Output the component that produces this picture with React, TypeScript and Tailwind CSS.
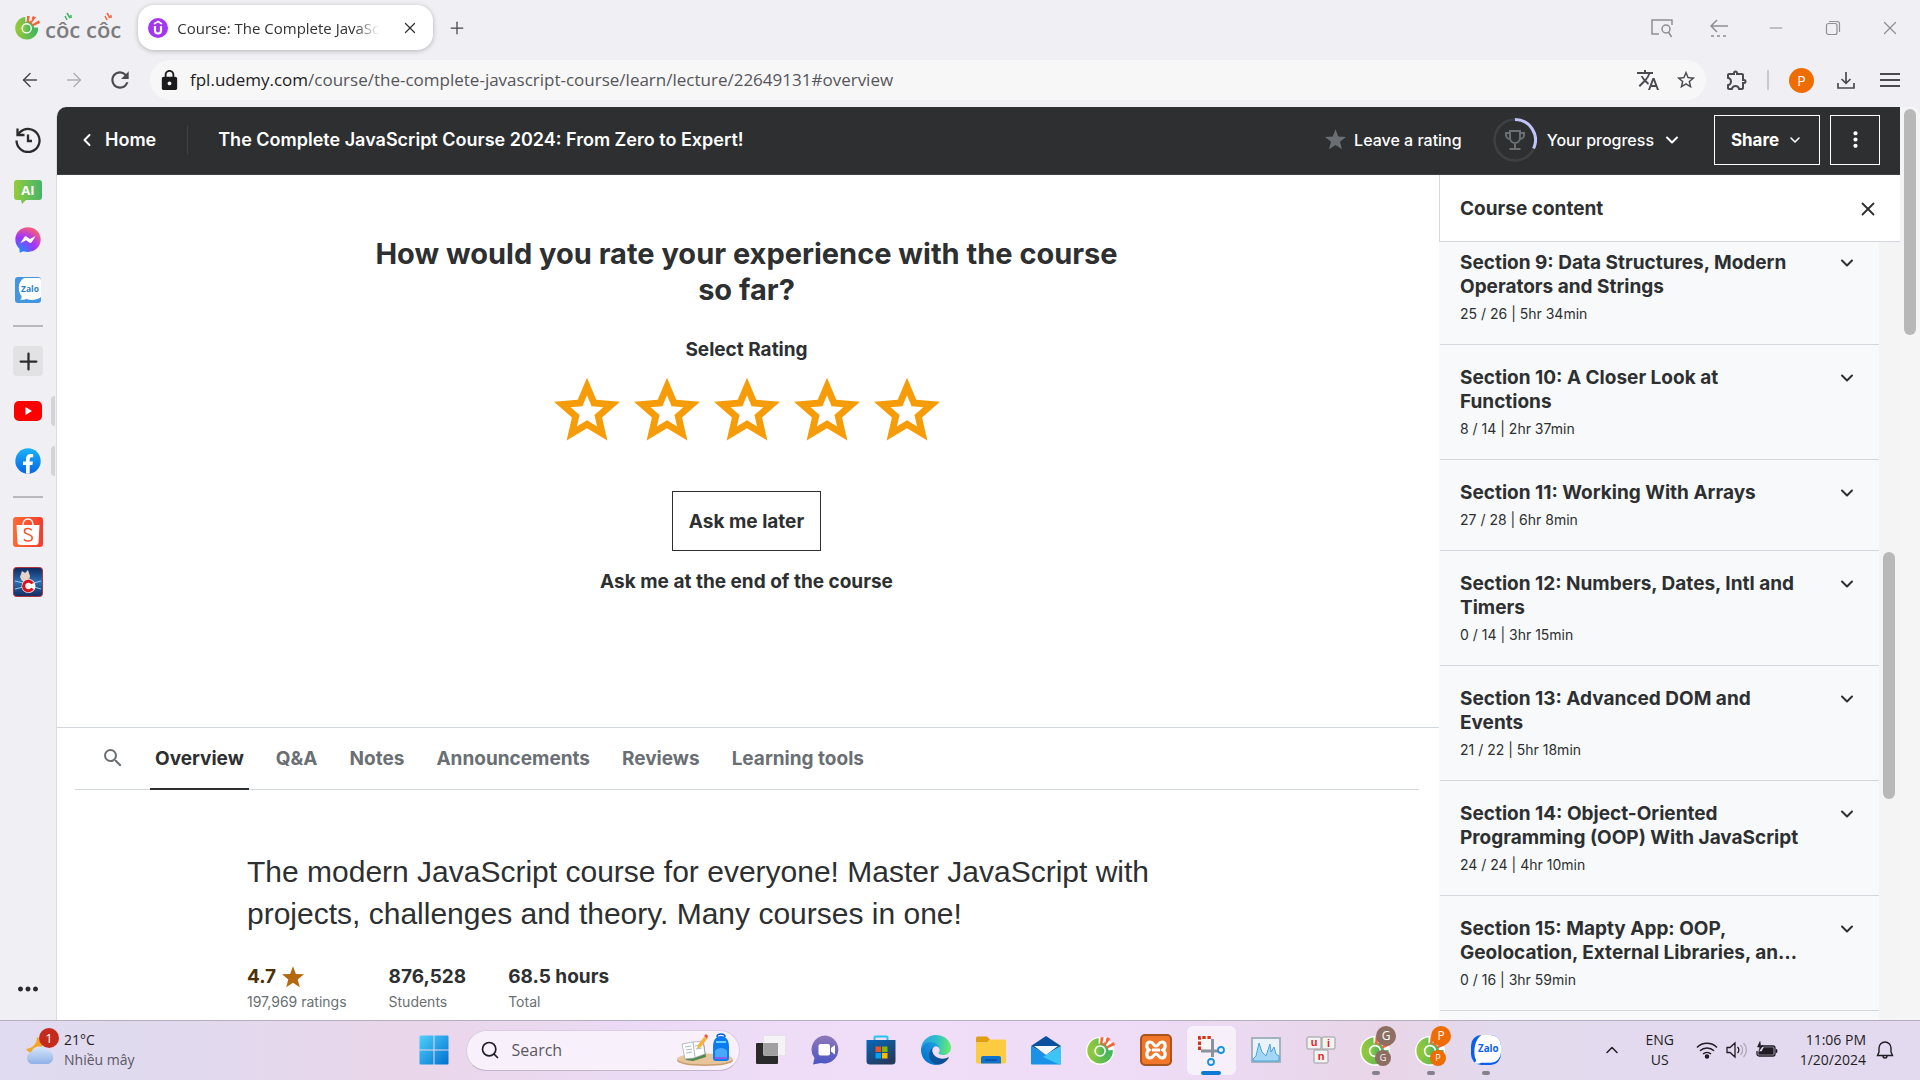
import React from "react";
import {
  ArrowLeft,
  ArrowRight,
  ChevronDown,
  ChevronLeft,
  ChevronUp,
  Plus,
  X,
  Search,
  Minus,
} from "lucide-react";
import {
  MdLock,
  MdTranslate,
  MdStarBorder,
  MdOutlineExtension,
  MdRefresh,
  MdSearch,
  MdMoreVert,
  MdMoreHoriz,
} from "react-icons/md";

const UI = "font-['Open_Sans','Noto_Sans',sans-serif]";

function starPath(cx: number, cy: number, outer: number, inner: number) {
  const pts: string[] = [];
  for (let i = 0; i < 10; i++) {
    const r = i % 2 === 0 ? outer : inner;
    const a = (Math.PI / 5) * i - Math.PI / 2;
    pts.push(`${(cx + r * Math.cos(a)).toFixed(2)} ${(cy + r * Math.sin(a)).toFixed(2)}`);
  }
  return `M${pts.join("L")}Z`;
}

function SolidStar({ className }: { className: string }) {
  return (
    <svg viewBox="0 0 24 24" className={className} fill="currentColor" aria-hidden="true">
      <path d={starPath(12, 13, 12.6, 5.4)} />
    </svg>
  );
}

function CocCocMark({ className, outlined = false }: { className: string; outlined?: boolean }) {
  return (
    <svg viewBox="0 0 32 32" className={className} aria-hidden="true">
      <defs>
        <linearGradient id="coccoc-green" x1="0" x2="1">
          <stop offset="0" stopColor="#97c93c" />
          <stop offset="1" stopColor="#3fb45f" />
        </linearGradient>
      </defs>
      {outlined && <circle cx="15" cy="17" r="15" fill="#fff" />}
      <path
        d="M14 3.2A13.6 13.6 0 1 0 28.6 16l-6.2.4A7.4 7.4 0 1 1 14.4 9.600Z"
        fill="url(#coccoc-green)"
      />
      <circle cx="15" cy="17" r="9" fill="url(#coccoc-green)" />
      <circle cx="15" cy="17" r="6.200" fill="#fff" />
      <circle cx="15" cy="17" r="4.600" fill="url(#coccoc-green)" />
      <path d="M15.500 2.500l3.200 0-1.400 8-2.200-.4zM22.500 2.500l3.600 1.400-6 8-2-1.200zM29.500 7.500l1.500 3.200-8.400 3.800-1.200-2z" fill="#f4653b" />
      <path d="M14 2.600v7M20.400 2v6" stroke="#fff" strokeWidth="1" />
    </svg>
  );
}

function CocCocLogo() {
  return (
    <div className="flex items-center gap-1" role="img" aria-label="côc côc">
      <CocCocMark className="size-[27px]" />
      <div className="relative pt-[2px]">
        <span className="block text-[22px] font-semibold leading-7 text-[#7b7c80]">côc côc</span>
        <svg viewBox="0 0 76 10" className="absolute -top-[2px] left-0 h-[10px] w-[76px]" fill="none" strokeWidth="1.500" aria-hidden="true">
          <path d="M20 5l2 4M22 2l3 5M26 4l0 3" stroke="#3fb45f" />
          <path d="M60 5l2 4M62 2l3 5M66 4l0 3" stroke="#f4653b" />
        </svg>
      </div>
    </div>
  );
}

function UdemyMark() {
  return (
    <svg viewBox="0 0 20 20" className="size-5 shrink-0" aria-hidden="true">
      <circle cx="10" cy="10" r="10" fill="#a435f0" />
      <path d="M6 6l4-2.500L14 6" fill="none" stroke="#fff" strokeWidth="1.600" />
      <path d="M7 8v4.500a3 3 0 0 0 6 0V8" fill="none" stroke="#fff" strokeWidth="2.200" />
    </svg>
  );
}

function TitleBar() {
  const control = "flex h-8 w-[57px] items-center justify-center text-[#8f8e93]";
  return (
    <header className="flex h-[55px] shrink-0 items-center pl-[14px] pr-[2px]">
      <CocCocLogo />
      <div className="ml-[17px] flex h-[45px] w-[295px] items-center rounded-2xl bg-white pl-[10px] pr-[14px] shadow-[0_1px_5px_rgba(0,0,0,0.25)]">
        <UdemyMark />
        <span className="ml-[9px] whitespace-nowrap text-[15px] leading-5 text-[#333] [mask-image:linear-gradient(to_right,black_88%,transparent)]">
          Course: The Complete JavaSc
        </span>
        <button aria-label="Close tab" className="ml-auto text-[#333]">
          <X className="size-[18px]" strokeWidth={1.6} />
        </button>
      </div>
      <button aria-label="New tab" className="ml-[14px] text-[#444]">
        <Plus className="size-5" strokeWidth={1.5} />
      </button>
      <div className="ml-auto flex">
        <button aria-label="Search tabs" className={control}>
          <svg viewBox="0 0 22 20" className="h-5 w-[22px]" fill="none" stroke="currentColor" strokeWidth="1.500">
            <path d="M8 16H1V2h20v5" />
            <circle cx="15" cy="11" r="4" />
            <path d="M17.500 14l3 5" />
          </svg>
        </button>
        <button aria-label="Tab history" className={control}>
          <svg viewBox="0 0 20 20" className="size-5" fill="none" stroke="currentColor" strokeWidth="1.500">
            <path d="M19 8H2M8 2L2 8l6 6" />
            <path d="M2 18h17" strokeDasharray="3 3" />
          </svg>
        </button>
        <button aria-label="Minimize" className={control}>
          <Minus className="size-5" strokeWidth={1.3} />
        </button>
        <button aria-label="Restore" className={control}>
          <svg viewBox="0 0 16 16" className="size-4" fill="none" stroke="currentColor" strokeWidth="1.200">
            <rect x="1.500" y="3.500" width="10.500" height="11" rx="2" />
            <path d="M4 1.500h8a2.500 2.500 0 0 1 2.500 2.500v8" />
          </svg>
        </button>
        <button aria-label="Close window" className={control}>
          <X className="size-[22px]" strokeWidth={1.3} />
        </button>
      </div>
    </header>
  );
}

function Toolbar() {
  return (
    <div className="flex h-[52px] shrink-0 items-center pb-[2px] pl-[19px] pr-5 text-[#4a4a4f]">
      <button aria-label="Back">
        <ArrowLeft className="size-[22px]" strokeWidth={1.6} />
      </button>
      <button aria-label="Forward" className="ml-[22px] text-[#b0afb4]">
        <ArrowRight className="size-[22px]" strokeWidth={1.6} />
      </button>
      <button aria-label="Reload" className="ml-[22px]">
        <MdRefresh className="size-[26px]" />
      </button>
      <div className="ml-[17px] flex h-10 flex-1 items-center rounded-full bg-[#f7f7f8] pl-2 pr-[9px]">
        <MdLock className="size-[23px] text-[#1b1b1d]" />
        <div role="textbox" aria-label="Address" className="ml-[9px] whitespace-nowrap text-[17px] leading-6 text-[#55555a]">
          <span className="font-medium text-[#1b1b1d]">fpl.udemy.com</span>
          /course/the-complete-javascript-course/learn/lecture/22649131#overview
        </div>
        <button aria-label="Translate" className="ml-auto">
          <MdTranslate className="size-6" />
        </button>
        <button aria-label="Bookmark" className="ml-[15px]">
          <MdStarBorder className="size-[22px]" />
        </button>
      </div>
      <button aria-label="Extensions" className="ml-[19px]">
        <MdOutlineExtension className="size-6" />
      </button>
      <div className="ml-[18px] h-5 w-[2px] bg-[#c9c8cd]" />
      <button aria-label="Profile" className="ml-[20px] flex size-[25px] items-center justify-center rounded-full bg-[#ef6c00] text-[14px] text-white">
        P
      </button>
      <button aria-label="Downloads" className="ml-[22px]">
        <svg viewBox="0 0 20 20" className="size-5" fill="none" stroke="currentColor" strokeWidth="1.700">
          <path d="M10 2v11M5.500 9L10 13.300 14.500 9M2 13v5h16v-5" />
        </svg>
      </button>
      <button aria-label="Menu" className="ml-[24px]">
        <svg viewBox="0 0 20 16" className="h-4 w-5" stroke="currentColor" strokeWidth="1.800">
          <path d="M0 2h20M0 8h20M0 14h20" />
        </svg>
      </button>
    </div>
  );
}

function HistoryIcon() {
  return (
    <svg viewBox="0 0 26 26" className="size-[26px]" fill="none" stroke="#2b2b2e" strokeWidth="2.300">
      <path d="M1.500 13.500A11.500 11.500 0 1 0 5 5.200L3 7.500" />
      <path d="M2.500 1.500v6.500h7M13 7.500V14h4" />
    </svg>
  );
}

function AiIcon() {
  return (
    <svg viewBox="0 -3 28 27" className="h-[27px] w-7">
      <defs>
        <linearGradient id="ai-green" x1="0" x2="1">
          <stop offset="0" stopColor="#94cc3a" />
          <stop offset="1" stopColor="#46b46a" />
        </linearGradient>
      </defs>
      <path d="M3 0h22a3 3 0 0 1 3 3v14a3 3 0 0 1-3 3H12l-4 4-1-4H3a3 3 0 0 1-3-3V3a3 3 0 0 1 3-3z" fill="url(#ai-green)" />
      <text x="14" y="14.500" textAnchor="middle" fontSize="13" fontWeight="700" fill="#fff" fontFamily="Open Sans, sans-serif">AI</text>
    </svg>
  );
}

function MessengerIcon() {
  return (
    <svg viewBox="0 0 26 26" className="size-[26px]">
      <defs>
        <radialGradient id="messenger" cx="0.2" cy="1" r="1.100">
          <stop offset="0" stopColor="#1292ff" />
          <stop offset="0.550" stopColor="#a033ff" />
          <stop offset="1" stopColor="#ff6070" />
        </radialGradient>
      </defs>
      <path d="M13 0.300C5.800.3.300 5.500.3 12.600c0 3.700 1.600 6.900 4.100 9.100l.4 4 3.600-1.500c1.400.5 3 .7 4.600.7 7.200 0 12.700-5.200 12.700-12.300S20.200.3 13 .3z" fill="url(#messenger)" />
      <path d="M5.400 16.200l3.700-5.900a2 2 0 0 1 2.800-.5l3 2.200 5.700-3-3.700 6a2 2 0 0 1-2.800.5l-3-2.200z" fill="#fff" />
    </svg>
  );
}

function ZaloIcon({ className, rounded = false }: { className: string; rounded?: boolean }) {
  return (
    <svg viewBox="0 0 26 26" className={className}>
      <rect width="26" height="26" rx={rounded ? 9 : 3} fill={rounded ? "#0b5fe8" : "#4296e0"} />
      <path
        d={rounded ? "M9 0h8a9 9 0 0 1 9 9v6a9 9 0 0 1-9 9H9c-2 1-4 1-6 .5 1-1 1.500-2 1.500-3C2 18 2 5 9 0z" : "M9 1h15a2 2 0 0 1 2 2v17c-5 4-12 3-15 2-2 1-4 1-6 .5 2-1 1.500-2.500 1.500-3.500C3 15 2 5 9 1z"}
        fill="#fff"
      />
      <text x="15" y="14.500" textAnchor="middle" fontSize="8.500" fontWeight="700" fill={rounded ? "#0b5fe8" : "#2f80d0"} fontFamily="Open Sans, sans-serif">Zalo</text>
    </svg>
  );
}

function YoutubeIcon() {
  return (
    <svg viewBox="0 0 28 20" className="h-5 w-7">
      <rect width="28" height="20" rx="5" fill="#f00" />
      <path d="M11.500 6v8l6.500-4z" fill="#fff" />
    </svg>
  );
}

function FacebookIcon() {
  return (
    <svg viewBox="0 0 26 26" className="size-[26px]">
      <defs>
        <linearGradient id="facebook" x2="0" y2="1">
          <stop offset="0" stopColor="#1cb2fb" />
          <stop offset="1" stopColor="#0566e3" />
        </linearGradient>
      </defs>
      <circle cx="13" cy="13" r="12.700" fill="url(#facebook)" />
      <path d="M11 25.600V17H8v-3.500h3V11c0-3.200 1.900-5 4.700-5 1 0 2 .2 2.500.3v3h-1.500c-1.500 0-2 .9-2 1.900v2.300h3.300l-.6 3.500H14.700v8.600c-1.200.2-2.500.2-3.700 0z" fill="#fff" />
    </svg>
  );
}

function ShopeeIcon() {
  return (
    <svg viewBox="0 0 30 30" className="size-[30px]">
      <defs>
        <linearGradient id="shopee" x1="0" x2="1">
          <stop offset="0" stopColor="#ff6a33" />
          <stop offset="1" stopColor="#f53d2d" />
        </linearGradient>
      </defs>
      <rect width="30" height="30" rx="3" fill="url(#shopee)" />
      <path d="M3.500 8h23l-1 18a2.500 2.500 0 0 1-2.500 2H7a2.500 2.500 0 0 1-2.500-2z" fill="#fff" />
      <path d="M10 8c0-3.500 2-6 5-6s5 2.500 5 6" fill="none" stroke="#fff" strokeWidth="1.500" />
      <path d="M18.800 13.200c-1.200-1.200-2.500-1.700-4-1.700-2 0-3.400 1.100-3.400 2.700 0 4 7.800 2.300 7.800 6.600 0 1.900-1.700 3.300-4 3.300-1.800 0-3.200-.6-4.400-1.700" fill="none" stroke="#f5502d" strokeWidth="1.500" />
    </svg>
  );
}

function GameIcon() {
  return (
    <svg viewBox="0 0 30 30" className="size-[30px]">
      <defs>
        <linearGradient id="game" x2="0" y2="1">
          <stop offset="0" stopColor="#10275c" />
          <stop offset="0.500" stopColor="#2c6fb4" />
          <stop offset="1" stopColor="#152a5e" />
        </linearGradient>
      </defs>
      <rect x="0.500" y="0.500" width="29" height="29" rx="3" fill="url(#game)" stroke="#b0323a" />
      <path d="M2 14l8 2M2 22l8-2M28 14l-7 2M28 22l-7-2" stroke="#8fc4ee" strokeWidth="1.200" />
      <path d="M9 4l3 2 3-3 2 6-1 5H9L7 10z" fill="#e5d3c8" />
      <circle cx="15.500" cy="19" r="7" fill="#fff" />
      <path d="M19.500 16.500a4.800 4.800 0 1 0 0 5" fill="none" stroke="#d9141b" strokeWidth="3.200" />
    </svg>
  );
}

function SideItem({ label, children, handle = false }: { label: string; children: React.ReactNode; handle?: boolean }) {
  return (
    <div className="flex h-[50px] w-full items-center">
      <div className="w-[11px]" />
      <button aria-label={label} className="flex w-[34px] items-center justify-center">
        {children}
      </button>
      {handle && <div className="ml-[6px] h-[30px] w-1 rounded-l bg-[#d3d2d6]" />}
    </div>
  );
}

function SideRule() {
  return (
    <div className="flex h-[21px] items-center pl-[13px]">
      <div className="h-[2px] w-[30px] bg-[#b9b8bd]" />
    </div>
  );
}

function SideBar() {
  return (
    <nav aria-label="Browser sidebar" className="flex w-14 shrink-0 flex-col pt-2">
      <SideItem label="History"><HistoryIcon /></SideItem>
      <SideItem label="AI chat"><AiIcon /></SideItem>
      <SideItem label="Messenger"><MessengerIcon /></SideItem>
      <SideItem label="Zalo"><ZaloIcon className="size-[26px]" /></SideItem>
      <SideRule />
      <SideItem label="Add shortcut">
        <span className="flex size-[30px] items-center justify-center rounded bg-[#e2e1e3]">
          <Plus className="size-[27px] text-[#2b2b2e]" strokeWidth={2} />
        </span>
      </SideItem>
      <SideItem label="YouTube" handle><YoutubeIcon /></SideItem>
      <SideItem label="Facebook" handle><FacebookIcon /></SideItem>
      <SideRule />
      <SideItem label="Shopee"><ShopeeIcon /></SideItem>
      <SideItem label="Game"><GameIcon /></SideItem>
      <button aria-label="More" className="mb-4 ml-[13px] mt-auto w-[30px]">
        <MdMoreHoriz className="size-[30px] text-[#2b2b2e]" />
      </button>
    </nav>
  );
}

function TrophyRing() {
  return (
    <svg viewBox="0 0 44 44" className="size-11" fill="none" aria-hidden="true">
      <circle cx="22" cy="22" r="20.500" stroke="#3e4143" strokeWidth="2.500" />
      <path d="M22 1.500A20.500 20.500 0 0 1 40.600 30.500" stroke="#c0c4fc" strokeWidth="3" />
      <g stroke="#6a6f73" strokeWidth="2">
        <path d="M17 13h10v7a5 5 0 0 1-10 0zM17 15h-4v2a4 4 0 0 0 4 4M27 15h4v2a4 4 0 0 1-4 4M22 25v5M16.500 31h11" />
      </g>
    </svg>
  );
}

function CourseHeader() {
  return (
    <div className="flex h-[68px] shrink-0 items-center border-b border-[#3e4143] bg-[#2d2f31] pb-[2px] pr-5 text-white">
      <a href="#home" className="flex items-center pl-5 text-[18px] font-semibold leading-6">
        <ChevronLeft className="size-5" strokeWidth={2.4} />
        <span className="ml-2">Home</span>
      </a>
      <div className="ml-[31px] h-7 w-px bg-[#3e4143]" />
      <a href="#course" className="ml-[30px] text-[18px] font-semibold leading-6">
        The Complete JavaScript Course 2024: From Zero to Expert!
      </a>
      <button className="ml-auto flex items-center text-[16px] font-medium leading-6">
        <SolidStar className="mr-2 size-[21px] text-[#6a6f73]" />
        Leave a rating
      </button>
      <button className="ml-[31px] flex items-center text-[16px] font-medium leading-6">
        <TrophyRing />
        <span className="ml-[10px]">Your progress</span>
        <ChevronDown className="ml-2 size-5" strokeWidth={2.4} />
      </button>
      <button className="ml-[32px] flex h-[50px] w-[106px] items-center justify-center gap-1 border border-white text-[17px] font-bold leading-6">
        Share
        <ChevronDown className="ml-1 size-4" strokeWidth={2.4} />
      </button>
      <button aria-label="More options" className="ml-[10px] flex size-[50px] items-center justify-center border border-white">
        <MdMoreVert className="size-[25px]" />
      </button>
    </div>
  );
}

function RatingPrompt() {
  return (
    <section className="flex h-[553px] shrink-0 flex-col items-center border-b border-[#d1d7dc] pr-[3px] pt-[61px] text-[#2d2f31]">
      <h1 className="max-w-[760px] text-center text-[29px] font-bold leading-9">
        How would you rate your experience with the course so far?
      </h1>
      <fieldset className="flex flex-col items-center">
        <legend className="mx-auto pt-[30px] text-[19px] font-bold leading-6">Select Rating</legend>
        <div className="mt-[14px] flex">
          {[1, 2, 3, 4, 5].map((n) => (
            <label key={n} className="relative block w-20">
              <input type="radio" name="rating" value={n} aria-label={`${n} stars`} className="absolute inset-0 appearance-none" />
              <svg viewBox="0 0 80 68" className="h-[68px] w-20" fill="#f69c08">
                <path fillRule="evenodd" d={starPath(40, 36.5, 34.7, 15.8) + starPath(40, 36.5, 17.2, 7.8)} />
              </svg>
            </label>
          ))}
        </div>
      </fieldset>
      <button className="mt-[47px] h-[60px] border border-[#2d2f31] px-4 pt-[2px] text-[19px] font-bold leading-6">
        Ask me later
      </button>
      <button className="mt-[19px] text-[19px] font-bold leading-6">Ask me at the end of the course</button>
    </section>
  );
}

const TABS = ["Overview", "Q&A", "Notes", "Announcements", "Reviews", "Learning tools"];

function CourseTabs() {
  return (
    <div role="tablist" className="mx-[18px] mr-5 flex h-[62px] shrink-0 border-b border-[#d1d7dc] pl-[26px]">
      <button aria-label="Search course" className="w-[26px] pb-[2px]">
        <MdSearch className="size-6 text-[#6a6f73]" />
      </button>
      <div className="ml-[23px] flex gap-[22px]">
        {TABS.map((tab, i) => (
          <button
            key={tab}
            role="tab"
            aria-selected={i === 0}
            className={
              i === 0
                ? "-mb-px border-b-2 border-[#2d2f31] px-[5px] pt-[2px] text-[19px] font-bold leading-6 text-[#2d2f31]"
                : "mb-px px-[5px] pt-[2px] text-[19px] font-bold leading-6 text-[#6a6f73]"
            }
          >
            {tab}
          </button>
        ))}
      </div>
    </div>
  );
}

function Overview() {
  return (
    <section className="mx-auto w-full max-w-[1002px] pt-[61px]">
      <p className="font-['Liberation_Sans',Arial,sans-serif] text-[30px] leading-[42px] text-[#2d2f31]">
        The modern JavaScript course for everyone! Master JavaScript with projects, challenges and theory. Many courses in one!
      </p>
      <dl className="mt-[30px] flex gap-[42px] text-[14px] leading-5 text-[#6a6f73]">
        <div className="flex flex-col-reverse justify-end gap-[3px]">
          <dt>197,969 ratings</dt>
          <dd className="flex items-center gap-[6px] text-[19px] font-bold leading-6 text-[#4d3105]">
            4.7
            <SolidStar className="size-[22px] text-[#b4690e]" />
          </dd>
        </div>
        <div className="flex flex-col-reverse justify-end gap-[3px]">
          <dt>Students</dt>
          <dd className="text-[19px] font-bold leading-6 text-[#2d2f31]">876,528</dd>
        </div>
        <div className="flex flex-col-reverse justify-end gap-[3px]">
          <dt>Total</dt>
          <dd className="text-[19px] font-bold leading-6 text-[#2d2f31]">68.5 hours</dd>
        </div>
      </dl>
    </section>
  );
}

const SECTIONS = [
  { title: "Section 9: Data Structures, Modern Operators and Strings", meta: "25 / 26 | 5hr 34min" },
  { title: "Section 10: A Closer Look at Functions", meta: "8 / 14 | 2hr 37min" },
  { title: "Section 11: Working With Arrays", meta: "27 / 28 | 6hr 8min" },
  { title: "Section 12: Numbers, Dates, Intl and Timers", meta: "0 / 14 | 3hr 15min" },
  { title: "Section 13: Advanced DOM and Events", meta: "21 / 22 | 5hr 18min" },
  { title: "Section 14: Object-Oriented Programming (OOP) With JavaScript", meta: "24 / 24 | 4hr 10min" },
  { title: "Section 15: Mapty App: OOP, Geolocation, External Libraries, an…", meta: "0 / 16 | 3hr 59min" },
];

function CourseContent() {
  return (
    <aside className="flex w-[461px] shrink-0 flex-col text-[#2d2f31]">
      <div className="flex h-[67px] shrink-0 items-center justify-between border-b border-l border-[#d1d7dc] bg-white pl-5 pr-[21px] pt-[2px]">
        <h2 className="text-[19px] font-bold leading-6">Course content</h2>
        <button aria-label="Close course content">
          <X className="size-[22px]" strokeWidth={2} />
        </button>
      </div>
      <div className="flex min-h-0 flex-1">
        <div className="flex-1 overflow-hidden bg-[#f7f9fa]">
          <div className="-mt-3 ml-px">
            {SECTIONS.map((s) => (
              <button key={s.title} className="flex w-full items-start border-b border-[#d1d7dc] pb-[19px] pl-5 pr-[22px] pt-[21px] text-left">
                <span className="w-[352px]">
                  <span className="block text-[19px] font-bold leading-6">{s.title}</span>
                  <span className="mt-1 block text-[14px] leading-[22px]">{s.meta}</span>
                </span>
                <ChevronDown className="ml-auto mt-[2px] size-5" strokeWidth={2.4} />
              </button>
            ))}
          </div>
        </div>
        <div className="w-[21px] bg-[#f4f4f4] pl-1 pt-[310px]">
          <div className="h-[247px] w-3 rounded-full bg-[#b8b8b8]" />
        </div>
      </div>
    </aside>
  );
}

function CourseViewer() {
  return (
    <div className="flex min-w-0 flex-1 overflow-hidden rounded-tl-[10px] rounded-tr-[10px] border-l border-[#dcdbe0] bg-white">
      <div className="flex min-w-0 flex-1 flex-col font-['Inter',sans-serif]">
        <CourseHeader />
        <div className="flex min-h-0 flex-1">
          <main className="flex min-w-0 flex-1 flex-col overflow-hidden">
            <RatingPrompt />
            <CourseTabs />
            <Overview />
          </main>
          <CourseContent />
        </div>
      </div>
      <div className="w-5 shrink-0 bg-[#f5f5f5] pl-1 pt-[2px]">
        <div className="h-[226px] w-3 rounded-full bg-[#b8b8b8]" />
      </div>
    </div>
  );
}

function WeatherIcon() {
  return (
    <div className="relative size-9">
      <svg viewBox="0 0 36 36" className="size-9">
        <defs>
          <linearGradient id="cloud" x2="0" y2="1">
            <stop offset="0" stopColor="#d7e7fb" />
            <stop offset="1" stopColor="#8fb0e6" />
          </linearGradient>
        </defs>
        <path d="M13 5c0 7-4 11-11 12 3 5 10 5 14 1s2-10-3-13z" fill="#f5a623" />
        <path d="M8 32a6 6 0 0 1-1-11.500A8.500 8.500 0 0 1 22 18a7.200 7.200 0 0 1 2.500 14z" fill="url(#cloud)" />
      </svg>
      <span className="absolute -top-[4px] left-[15px] flex size-5 items-center justify-center rounded-full bg-[#c42b1c] text-[13px] text-white">1</span>
    </div>
  );
}

function WindowsIcon() {
  return (
    <svg viewBox="0 0 30 30" className="size-[30px]">
      <defs>
        <linearGradient id="windows" x2="1" y2="1">
          <stop offset="0" stopColor="#4fd0fb" />
          <stop offset="1" stopColor="#0070d0" />
        </linearGradient>
      </defs>
      <path d="M1.500.5h13v14h-14v-13zM15.500.5h13a1 1 0 0 1 1 1v13h-14zM.5 15.500h14v14h-13a1 1 0 0 1-1-1zM15.500 15.500h14v13a1 1 0 0 1-1 1h-13z" fill="url(#windows)" />
    </svg>
  );
}

function SearchArt() {
  return (
    <svg viewBox="0 0 56 34" className="h-[34px] w-14">
      <ellipse cx="28" cy="27.500" rx="28" ry="5.500" fill="#c99b6d" />
      <ellipse cx="28" cy="26" rx="28" ry="5.500" fill="#e8c49a" />
      <path d="M6 13l12-3 9 1 2 13-13 4-7-1z" fill="#4f8a4a" />
      <path d="M5 11l11-2 10-1 2 13-11 4-9 1z" fill="#fff" stroke="#9aa3ad" strokeWidth="0.700" />
      <path d="M16 9l2 15M8 14l6-1M9 17l6-1M9 20l6-1M18 13l6-1M19 16l6-1" stroke="#9aa3ad" strokeWidth="0.800" />
      <path d="M20 16l1-4 6-8 3 2-6 8z" fill="#f9b233" />
      <path d="M27 3l2-2 2 2-1 3z" fill="#f0553c" />
      <path d="M36 14c0-7 3-11 8-11s8 4 8 11v11a3 3 0 0 1-3 3H39a3 3 0 0 1-3-3z" fill="#0a7cf0" />
      <path d="M40 4c0-4 8-4 8 0" fill="none" stroke="#0a5fd0" strokeWidth="1.500" />
      <path d="M38 18c2-4 10-4 12 0v6H38z" fill="#48a8ff" />
      <path d="M38 24h12v2H38z" fill="#8f5cf0" />
      <path d="M39 9h10" stroke="#6fd0ff" strokeWidth="2" />
    </svg>
  );
}

function TaskViewIcon() {
  return (
    <svg viewBox="0 0 30 30" className="size-[30px]">
      <rect x="0" y="8" width="22" height="21" rx="1" fill="#2a2a2a" />
      <rect x="7.500" y="0.500" width="22" height="20" rx="1" fill="#f5f5f5" fillOpacity="0.900" stroke="#ddd" strokeWidth="0.500" />
      <path d="M7.500 8H22v12.500H7.500z" fill="#a0a0a0" />
    </svg>
  );
}

function ChatIcon() {
  return (
    <svg viewBox="0 0 30 30" className="size-[30px]">
      <defs>
        <linearGradient id="chat" x2="0" y2="1">
          <stop offset="0" stopColor="#8f79b8" />
          <stop offset="1" stopColor="#4a55c4" />
        </linearGradient>
      </defs>
      <path d="M15 .5a14 14 0 1 1-5 27.500l-8 1.500 1.500-6.500A14 14 0 0 1 15 .5z" fill="url(#chat)" />
      <rect x="7.500" y="9" width="11.500" height="11.500" rx="2" fill="#fff" />
      <path d="M20 13l4-3v9.500l-4-3z" fill="#fff" />
    </svg>
  );
}

function StoreIcon() {
  return (
    <svg viewBox="0 0 30 30" className="size-[30px]">
      <defs>
        <linearGradient id="store" x2="0.600" y2="1">
          <stop offset="0" stopColor="#0669bc" />
          <stop offset="1" stopColor="#243a5e" />
        </linearGradient>
      </defs>
      <path d="M8.500 7V2.500a1 1 0 0 1 1-1h11a1 1 0 0 1 1 1V7" fill="none" stroke="#28c2f5" strokeWidth="2" />
      <path d="M.5 5h29v21a3.500 3.500 0 0 1-3.500 3.500H4A3.500 3.500 0 0 1 .5 26z" fill="url(#store)" />
      <path d="M9.500 11.500H15V17H9.500z" fill="#f25022" />
      <path d="M16 11.500h5.500V17H16z" fill="#7fba00" />
      <path d="M9.500 18H15v5.500H9.500z" fill="#00a4ef" />
      <path d="M16 18h5.500v5.500H16z" fill="#ffb900" />
    </svg>
  );
}

function EdgeIcon() {
  return (
    <svg viewBox="0 0 256 256" className="size-[30px]">
      <defs>
        <linearGradient id="edge-a" x1="60" x2="240" y1="177" y2="177" gradientUnits="userSpaceOnUse">
          <stop offset="0" stopColor="#0c59a4" />
          <stop offset="1" stopColor="#114a8b" />
        </linearGradient>
        <linearGradient id="edge-b" x1="150" x2="45" y1="100" y2="215" gradientUnits="userSpaceOnUse">
          <stop offset="0" stopColor="#1b9de2" />
          <stop offset="0.600" stopColor="#1384d6" />
          <stop offset="1" stopColor="#0078d4" />
        </linearGradient>
        <linearGradient id="edge-c" x1="20" x2="250" y1="60" y2="90" gradientUnits="userSpaceOnUse">
          <stop offset="0" stopColor="#2aa5e0" />
          <stop offset="0.500" stopColor="#2ec0c8" />
          <stop offset="1" stopColor="#66eb6e" />
        </linearGradient>
      </defs>
      <path fill="url(#edge-a)" d="M231 190.500c-3.400 1.800-6.900 3.400-10.500 4.700a101.500 101.500 0 0 1-35.900 6.500c-47.300 0-88.500-32.500-88.500-74.300a31.500 31.500 0 0 1 16.400-27.300c-42.800 1.800-53.800 46.400-53.800 72.500 0 74 68.100 81.400 82.800 81.400 7.900 0 19.800-2.300 27-4.600l1.300-.4a128.300 128.300 0 0 0 66.600-52.800 4 4 0 0 0-5.400-5.700z" />
      <path fill="url(#edge-b)" d="M105.700 241.400a79.200 79.200 0 0 1-22.700-21.300 80.700 80.700 0 0 1 29.500-120c3.200-1.500 8.500-4.100 15.600-4a32.400 32.400 0 0 1 25.700 13 31.900 31.900 0 0 1 6.300 18.700c0-.2 24.500-79.600-80-79.600-43.900 0-80 41.700-80 78.200a130.200 130.200 0 0 0 12.100 56 128 128 0 0 0 156.400 67 75.600 75.600 0 0 1-62.800-8z" />
      <path fill="url(#edge-c)" d="M152.300 148.900c-.8 1-3.300 2.500-3.300 5.700 0 2.600 1.700 5.100 4.700 7.200 14.400 10 41.500 8.700 41.600 8.700a59.600 59.600 0 0 0 30.300-8.300 61.400 61.400 0 0 0 30.400-52.900c.3-22.400-8-37.300-11.300-43.900C223.500 23.900 177.700 0 128 0A128 128 0 0 0 0 126.200c.5-36.500 36.800-66 80-66 3.500 0 23.500.3 42 10a72.600 72.600 0 0 1 30.900 29.300c6.100 10.600 7.200 24.100 7.200 29.500s-2.700 13.300-7.800 19.900z" />
    </svg>
  );
}

function FolderIcon() {
  return (
    <svg viewBox="0 0 30 30" className="size-[30px]">
      <path d="M0 3a1.500 1.500 0 0 1 1.500-1.500H11l3 3-3 3H0z" fill="#e09e10" />
      <path d="M0 7.500h11l3-3h14.500A1.500 1.500 0 0 1 30 6v21a1.500 1.500 0 0 1-1.500 1.500h-27A1.500 1.500 0 0 1 0 27z" fill="#fdcb3f" />
      <path d="M5 28.500V23a2 2 0 0 1 2-2h16a2 2 0 0 1 2 2v5.500z" fill="#1173d0" />
      <path d="M9 25h12" stroke="#0a4f9e" strokeWidth="1.500" />
    </svg>
  );
}

function MailIcon() {
  return (
    <svg viewBox="0 0 30 30" className="size-[30px]">
      <path d="M0 11L15 1l15 10-15 9z" fill="#0b4f9f" />
      <path d="M3 11h24L15 20z" fill="#f3f7fb" />
      <path d="M0 11l16 9.500L30 11v17.500a1 1 0 0 1-1 1H1a1 1 0 0 1-1-1z" fill="#1a93e6" />
      <path d="M30 11L12 22l16 7.500h1a1 1 0 0 0 1-1z" fill="#3cc4f5" />
    </svg>
  );
}

function XamppIcon() {
  return (
    <svg viewBox="0 0 32 32" className="size-8">
      <rect x="1" y="1" width="30" height="30" rx="4" fill="#f0762a" stroke="#a8541e" strokeWidth="2" />
      <path d="M10 8c4 0 3 4 6 4s2-4 6-4 4 6 1 8c3 2 3 8-1 8s-3-4-6-4-2 4-6 4-4-6-1-8c-3-2-3-8 1-8z" fill="none" stroke="#fff" strokeWidth="3.200" />
      <path d="M12 16h8" stroke="#fff" strokeWidth="3" />
    </svg>
  );
}

function SnipIcon() {
  return (
    <svg viewBox="0 0 30 32" className="h-8 w-[30px]" fill="none">
      <path d="M2 3h14v14H2z" fill="#f6f6f6" />
      <path d="M3.500 16V3.500H16" stroke="#d4321a" strokeWidth="3" strokeDasharray="3.400 1.700" />
      <path d="M5 17h18M16.500 5v18" stroke="#8b929b" strokeWidth="3" />
      <circle cx="25" cy="16" r="3" stroke="#1a93e0" strokeWidth="1.800" />
      <circle cx="15" cy="28" r="3" stroke="#1a93e0" strokeWidth="1.800" />
    </svg>
  );
}

function MonitorIcon() {
  return (
    <svg viewBox="0 0 30 26" className="h-[26px] w-[30px]">
      <rect x="1" y="1" width="28" height="24" fill="#eaf3fa" stroke="#a5b3bf" strokeWidth="2" />
      <path d="M2 22l3-3 3-13 3 9 4 4 4-12 1 8 3-5 2 7 3 2v5H2z" fill="#a6d6f5" stroke="#4ba3dc" strokeWidth="1" />
    </svg>
  );
}

function UnikeyIcon() {
  return (
    <svg viewBox="0 0 30 28" className="h-7 w-[30px]">
      <g fill="#f3f3f3" stroke="#9b9b9b">
        <rect x="1" y="1" width="14" height="12" rx="1" />
        <rect x="16" y="1" width="13" height="12" rx="1" />
        <rect x="8" y="14" width="14" height="13" rx="1" />
      </g>
      <g fill="#e01f26" fontSize="11" fontWeight="700" textAnchor="middle" fontFamily="Liberation Sans, sans-serif">
        <text x="8" y="10">u</text>
        <text x="22.500" y="10.500">i</text>
        <text x="15" y="24">n</text>
      </g>
    </svg>
  );
}

function ProfileApp({ letter, brown }: { letter: string; brown: boolean }) {
  const tone = brown ? "bg-[#8d6e63]" : "bg-[#ef6c00]";
  return (
    <div className="relative size-8 text-white">
      <CocCocMark className="size-8" outlined />
      <span className={`absolute -top-2 left-4 flex size-5 items-center justify-center rounded-full text-[12px] leading-5 ${tone}`}>{letter}</span>
      <span className={`absolute left-[15px] top-4 flex size-4 items-center justify-center rounded-full text-[9px] leading-4 ${tone}`}>{letter}</span>
    </div>
  );
}

function TaskbarApp({ label, children, active = false, running = false }: { label: string; children: React.ReactNode; active?: boolean; running?: boolean }) {
  return (
    <button
      aria-label={label}
      className={
        active
          ? "relative mx-[3px] flex h-[49px] w-[49px] items-center justify-center rounded-md bg-white/60"
          : "relative flex h-[49px] w-[55px] items-center justify-center"
      }
    >
      {children}
      {active && <span className="absolute bottom-0 h-1 w-5 rounded-full bg-[#0f78d4]" />}
      {running && <span className="absolute bottom-0 h-1 w-2 rounded-full bg-[#84808c]" />}
    </button>
  );
}

function Taskbar() {
  return (
    <footer className="flex h-[60px] shrink-0 items-center justify-between border-t border-[#b5afbd] bg-[linear-gradient(90deg,#e0dbf0_0%,#e1daef_10%,#ead6ea_21%,#ebdaf3_32%,#f0def9_45%,#efddf8_58%,#e9d8ee_67%,#e9d5e7_72%,#e3daee_78%,#e3daf0_100%)] pb-px text-[#1f1d24]">
      <button className="flex w-[400px] items-center gap-1 pl-6 text-left text-[14px] leading-5">
        <WeatherIcon />
        <span>
          <span className="block">21°C</span>
          <span className="block text-[#5b5763]">Nhiều mây</span>
        </span>
      </button>
      <div className="flex items-center">
        <TaskbarApp label="Start"><WindowsIcon /></TaskbarApp>
        <label className="mx-1 flex h-[41px] w-[274px] items-center rounded-full border border-[#dccbe2] border-b-[#c3b5ca] bg-[#f8f1fb] pl-[13px] pr-[6px]">
          <Search className="size-5 shrink-0" strokeWidth={2} />
          <input
            type="text"
            placeholder="Search"
            aria-label="Search"
            className="ml-3 min-w-0 flex-1 bg-transparent text-[16px] leading-6 placeholder-[#5b5763] outline-none"
          />
          <SearchArt />
        </label>
        <TaskbarApp label="Task view"><TaskViewIcon /></TaskbarApp>
        <TaskbarApp label="Chat"><ChatIcon /></TaskbarApp>
        <TaskbarApp label="Microsoft Store"><StoreIcon /></TaskbarApp>
        <TaskbarApp label="Edge"><EdgeIcon /></TaskbarApp>
        <TaskbarApp label="File Explorer"><FolderIcon /></TaskbarApp>
        <TaskbarApp label="Mail"><MailIcon /></TaskbarApp>
        <TaskbarApp label="Browser"><CocCocMark className="size-[30px]" outlined /></TaskbarApp>
        <TaskbarApp label="XAMPP"><XamppIcon /></TaskbarApp>
        <TaskbarApp label="Snipping Tool" active><SnipIcon /></TaskbarApp>
        <TaskbarApp label="Resource Monitor"><MonitorIcon /></TaskbarApp>
        <TaskbarApp label="UniKey"><UnikeyIcon /></TaskbarApp>
        <TaskbarApp label="Browser, profile G" running><ProfileApp letter="G" brown /></TaskbarApp>
        <TaskbarApp label="Browser, profile P" running><ProfileApp letter="P" brown={false} /></TaskbarApp>
        <TaskbarApp label="Zalo" running><ZaloIcon className="size-[30px]" rounded /></TaskbarApp>
      </div>
      <div className="flex w-[400px] items-center justify-end pr-[26px] text-[14px] leading-5">
        <button aria-label="Hidden icons">
          <ChevronUp className="size-5" strokeWidth={1.8} />
        </button>
        <button className="ml-[24px] text-center">
          ENG
          <br />
          US
        </button>
        <button aria-label="Network, sound and battery" className="ml-[22px] flex items-center gap-2">
          <svg viewBox="0 0 22 18" className="h-[18px] w-[22px]" fill="none" stroke="currentColor" strokeWidth="1.500">
            <path d="M1 6.500a14 14 0 0 1 20 0M4 9.800a10 10 0 0 1 14 0M7 13a6 6 0 0 1 8 0" />
            <circle cx="11" cy="15.500" r="1.500" fill="currentColor" />
          </svg>
          <svg viewBox="0 0 22 18" className="h-[18px] w-[22px]" fill="none" stroke="currentColor" strokeWidth="1.300">
            <path d="M1 6.500v5h3L9 16V2L4 6.500zM11.500 6a4 4 0 0 1 0 6" />
            <path d="M14.500 4a7 7 0 0 1 0 10M17.500 2a10 10 0 0 1 0 14" stroke="#b0a9ba" />
          </svg>
          <svg viewBox="0 0 22 18" className="h-[18px] w-[22px]" fill="none" stroke="currentColor" strokeWidth="1.300">
            <path d="M6 5h11a2 2 0 0 1 2 2v6a2 2 0 0 1-2 2H3a2 2 0 0 1-2-2v-3" />
            <path d="M8 7h9v6H3v-2h3z" fill="currentColor" />
            <path d="M20 8.500v3h1v-3zM4 .5L1.500 6H4l-1 4 4-5.500H4.500z" fill="currentColor" strokeWidth="0.600" />
          </svg>
        </button>
        <button className="ml-[18px] w-[70px] text-right">
          11:06 PM
          <br />
          1/20/2024
        </button>
        <button aria-label="Notifications" className="ml-[10px]">
          <svg viewBox="0 0 18 20" className="h-5 w-[18px]" fill="none" stroke="currentColor" strokeWidth="1.400">
            <path d="M1.500 15.500L3 12V8a6 6 0 0 1 12 0v4l1.500 3.500zM7 16a2 2 0 0 0 4 0" />
          </svg>
        </button>
      </div>
    </footer>
  );
}

export default function App() {
  return (
    <div className={`flex h-screen flex-col overflow-hidden bg-[#f0eff4] ${UI}`}>
      <TitleBar />
      <Toolbar />
      <div className="flex min-h-0 flex-1">
        <SideBar />
        <CourseViewer />
      </div>
      <Taskbar />
    </div>
  );
}
